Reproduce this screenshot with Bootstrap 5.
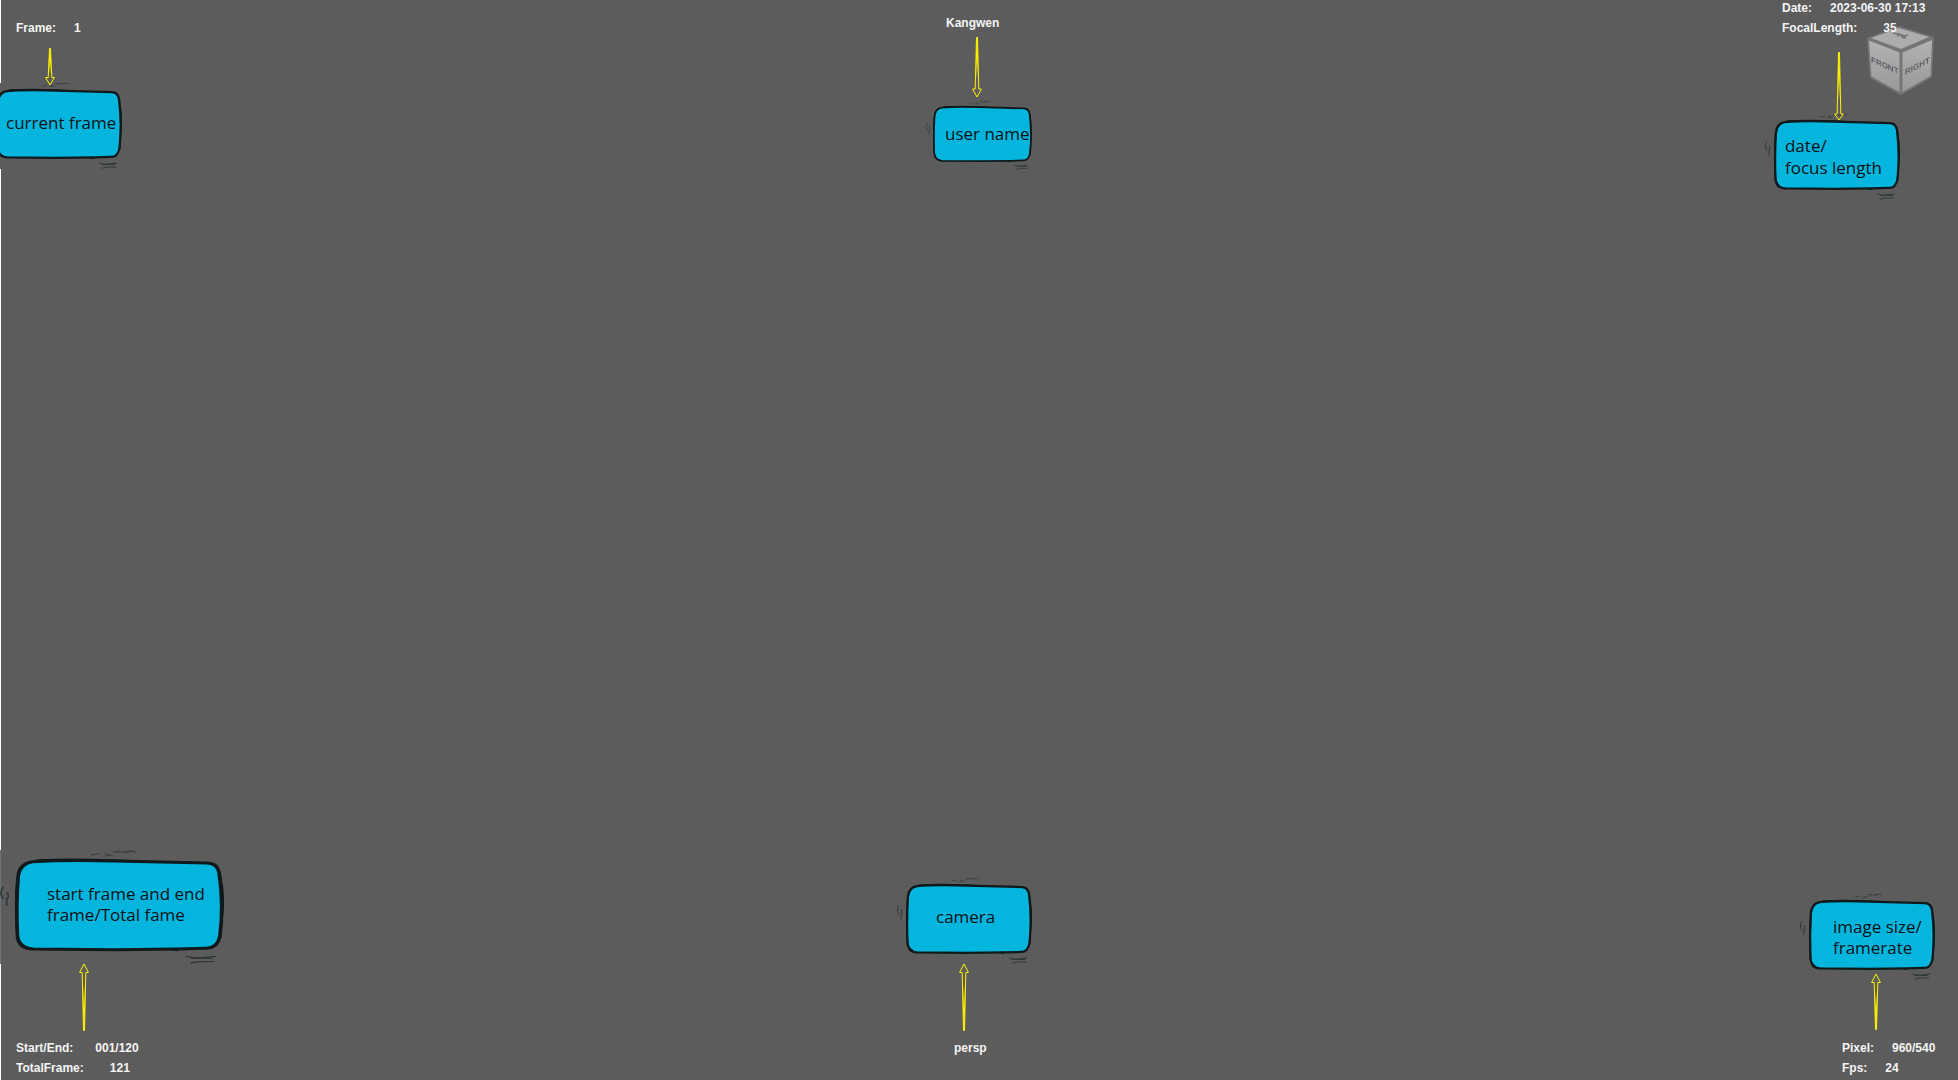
<!DOCTYPE html>
<html lang="en">
<head>
<meta charset="utf-8">
<meta name="viewport" content="width=device-width, initial-scale=1">
<title>Viewport HUD</title>
<link href="https://cdn.jsdelivr.net/npm/bootstrap@5.3.0/dist/css/bootstrap.min.css" rel="stylesheet">
<style>
  body { background: #5c5c5c; }
  .viewport { min-height: 100vh; overflow: hidden; }
  .edge { left: 0; top: 0; bottom: 0; width: 1px; }
  .edge-light { background: #fff; }
  .edge-top { height: 83px; }
  .edge-gap { height: 86px; }
  .edge-dark { height: 114px; background: #69737a; }
  .edge-bottom { height: 116px; }

  .hud { font: bold 12px/14px "Liberation Sans", Arial, sans-serif; color: #f4f4f4; display: flex; flex-direction: column; gap: 6px; }
  .pair { display: flex; gap: 18px; white-space: nowrap; }
  .pair-wide { gap: 26px; }

  .note { position: relative; width: 126px; height: 70px; display: flex; align-items: center; color: #0b1114; font: 17px/22px "Open Sans", "Noto Sans", sans-serif; white-space: nowrap; }
  .note > svg { position: absolute; inset: 0; width: 100%; height: 100%; overflow: visible; }
  .note > span { position: relative; }
  #bubble { overflow: visible; }
  .note-small { width: 99px; height: 56px; }
  .note-large { width: 209px; height: 92px; line-height: 21px; }
  .arrow { display: block; position: relative; z-index: 1; width: 10px; fill: url(#fade); stroke: #fff200; stroke-width: 1; }
  .arrow-down { fill: url(#fade-down); }

  .frame-block { padding-top: 21px; margin-left: -4px; }
  .frame-block .hud { padding-left: 20px; }
  .frame-block .arrow { margin: 13px 0 3px 49px; }
  .frame-block .note { padding: 0 0 2px 10px; }

  .user-block { width: 106px; padding: 16px 0 0 7px; }
  .user-block .hud { padding-left: 13px; }
  .user-block .arrow { margin: 7px 0 8px 39px; }
  .user-block .note { padding-left: 12px; }

  .date-block { width: 184px; padding-top: 1px; }
  .date-block .hud { padding-left: 8px; position: relative; z-index: 2; }
  .date-block .arrow { margin: 17px 0 -1px 60px; }
  .date-block .note { padding: 4px 0 0 11px; }

  .range-block { padding: 0 0 5px 15px; }
  .range-block .arrow { margin: 12px 0 10px 64px; }
  .range-block .hud { padding-left: 1px; }
  .range-block .note { padding: 0 0 2px 32px; }

  .camera-block { width: 146px; padding-bottom: 25px; }
  .camera-block .note { padding: 0 0 4px 30px; }
  .camera-block .arrow { margin: 9px 0 10px 53px; }
  .camera-block .hud { padding-left: 48px; }

  .pixel-block { width: 149px; padding-bottom: 5px; }
  .pixel-block .note { padding: 3px 0 0 24px; line-height: 21px; }
  .pixel-block .arrow { margin: 3px 0 11px 62px; }
  .pixel-block .hud { padding-left: 33px; }

  .cube { position: absolute; top: 24px; right: 22px; width: 70px; height: 74px; }
</style>
<script src="https://cdn.jsdelivr.net/npm/bootstrap@5.3.0/dist/js/bootstrap.bundle.min.js" defer></script>
</head>
<body>
<svg width="0" height="0" class="position-absolute" aria-hidden="true">
  <defs>
    <linearGradient id="fade" x1="0" y1="0" x2="0" y2="1">
      <stop offset="0.3" stop-color="#fff200" stop-opacity="0"/>
      <stop offset="0.7" stop-color="#fff200" stop-opacity="1"/>
    </linearGradient>
    <linearGradient id="fade-down" x1="0" y1="1" x2="0" y2="0">
      <stop offset="0.3" stop-color="#fff200" stop-opacity="0"/>
      <stop offset="0.7" stop-color="#fff200" stop-opacity="1"/>
    </linearGradient>
    <symbol id="bubble" viewBox="0 0 126 69" preserveAspectRatio="none">
      <path d="M11 2 Q30 .5 60 1.500 L116 3 Q122 3 123 10 Q126 35 123.500 58 Q122 67 115 67 L98 67.500 L60 68 L11 67.500 Q2 67 1.500 58 Q.5 35 2 12 Q3 3 11 2Z" fill="#04b5de" stroke="#10191c" stroke-width="2.200"/>
      <path d="M13 1 Q35 0 58 1 L78 2 M116 3 Q122.500 4 123.500 12 Q126.500 30 124.500 45 L123.500 60 M94 67.500 l4 1 M1.500 14 Q0 33 1.500 57 Q2.500 66 11 67.500 M2 13 Q3 4 11 2" fill="none" stroke="#10191c" stroke-width="1.600"/>
      <g fill="none" stroke="#30383a" stroke-width="1">
        <path d="M46 -3 l5 -1 m3 0 l3 1 m2 -2 l4 -1 m2 1 l5 -1 l3 1" opacity=".65"/>
        <path d="M53 -2 l6 -1 M61 -5 h8" opacity=".5"/>
        <path d="M-7 21 q-3 4 0 9 M-5 25 q2 3 0 5 l0 5"/>
        <path d="M103 73 l5 1 h4 l9 -1 M106 74.500 h13 M106 78 l5 -1 h9"/>
      </g>
    </symbol>
  </defs>
</svg>

<main class="viewport position-relative d-flex flex-column justify-content-between">
  <div class="edge position-absolute d-flex flex-column" aria-hidden="true">
    <div class="edge-light edge-top"></div>
    <div class="edge-gap"></div>
    <div class="edge-light flex-grow-1"></div>
    <div class="edge-dark"></div>
    <div class="edge-light edge-bottom"></div>
  </div>

  <div class="row g-0 align-items-start">
    <div class="col-4">
      <section class="frame-block">
        <div class="hud"><div class="pair"><span>Frame:</span><span>1</span></div></div>
        <svg class="arrow arrow-down" height="38" viewBox="0 0 10 38"><path d="M5 37 L.6 29.500 H3.200 L4.500 .5 H5.500 L6.800 29.500 H9.400Z"/></svg>
        <div class="note"><svg aria-hidden="true"><use href="#bubble" width="100%" height="100%"/></svg><span>current frame</span></div>
      </section>
    </div>
    <div class="col-4 d-flex justify-content-center">
      <section class="user-block">
        <div class="hud"><span>Kangwen</span></div>
        <svg class="arrow arrow-down" height="61" viewBox="0 0 10 61"><path d="M5 60 L.6 52 H3.200 L4.500 .5 H5.500 L6.800 52 H9.400Z"/></svg>
        <div class="note note-small"><svg aria-hidden="true"><use href="#bubble" width="100%" height="100%"/></svg><span>user name</span></div>
      </section>
    </div>
    <div class="col-4 d-flex justify-content-end">
      <section class="date-block">
        <div class="hud">
          <div class="pair"><span>Date:</span><span>2023-06-30 17:13</span></div>
          <div class="pair pair-wide"><span>FocalLength:</span><span>35</span></div>
        </div>
        <svg class="arrow arrow-down" height="69" viewBox="0 0 10 69"><path d="M5 68 L.6 62 H3.200 L4.500 .5 H5.500 L6.800 62 H9.400Z"/></svg>
        <div class="note"><svg aria-hidden="true"><use href="#bubble" width="100%" height="100%"/></svg><span>date/<br>focus length</span></div>
      </section>
    </div>
  </div>

  <svg class="cube" viewBox="0 0 70 74" role="img" aria-label="View cube">
    <defs>
      <linearGradient id="side" x1="0" y1="0" x2="0" y2="1"><stop offset="0" stop-color="#b2b2b2"/><stop offset="1" stop-color="#999"/></linearGradient>
      <filter id="soft"><feGaussianBlur stdDeviation="0.5"/></filter>
    </defs>
    <path d="M1 14 L33 2 L68 13 L66 53 L35 71 L4 54Z" fill="#757575" filter="url(#soft)"/>
    <path d="M5 14 L33 4 L63 13 L35 25Z" fill="#adadad"/>
    <path d="M3 16.500 L33.500 28.500 V68 L5.500 52.500Z" fill="url(#side)"/>
    <path d="M66 16 L36.500 28.500 V68 L64.500 52Z" fill="url(#side)"/>
    <g font-family="Liberation Sans, sans-serif" font-weight="bold" font-size="8" fill="#5c6066" filter="url(#soft)">
      <text transform="translate(5 38) skewY(24)">FRONT</text>
      <text transform="translate(39 51) skewY(-27)">RIGHT</text>
      <path d="M27 9 L34 11 L31 12 M31 9.500 L39 12 L42 11 M35 13 L40 14" fill="none" stroke="#777" stroke-width="1.800"/>
    </g>
  </svg>

  <div class="row g-0 align-items-end">
    <div class="col-4">
      <section class="range-block">
        <div class="note note-large"><svg aria-hidden="true"><use href="#bubble" width="100%" height="100%"/></svg><span>start frame and end<br>frame/Total fame</span></div>
        <svg class="arrow" height="68" viewBox="0 0 10 68"><path d="M5 1 L.6 9.500 H3.200 L4.500 67.500 H5.500 L6.800 9.500 H9.400Z"/></svg>
        <div class="hud">
          <div class="pair"><span>Start/End:</span><span class="ps-1">001/120</span></div>
          <div class="pair pair-wide"><span>TotalFrame:</span><span>121</span></div>
        </div>
      </section>
    </div>
    <div class="col-4 d-flex justify-content-center">
      <section class="camera-block">
        <div class="note"><svg aria-hidden="true"><use href="#bubble" width="100%" height="100%"/></svg><span>camera</span></div>
        <svg class="arrow" height="68" viewBox="0 0 10 68"><path d="M5 1 L.6 9.500 H3.200 L4.500 67.500 H5.500 L6.800 9.500 H9.400Z"/></svg>
        <div class="hud"><span>persp</span></div>
      </section>
    </div>
    <div class="col-4 d-flex justify-content-end">
      <section class="pixel-block">
        <div class="note"><svg aria-hidden="true"><use href="#bubble" width="100%" height="100%"/></svg><span>image size/<br>framerate</span></div>
        <svg class="arrow" height="57" viewBox="0 0 10 57"><path d="M5 1 L.6 9.500 H3.200 L4.500 56.500 H5.500 L6.800 9.500 H9.400Z"/></svg>
        <div class="hud">
          <div class="pair"><span>Pixel:</span><span>960/540</span></div>
          <div class="pair"><span>Fps:</span><span>24</span></div>
        </div>
      </section>
    </div>
  </div>
</main>
</body>
</html>
